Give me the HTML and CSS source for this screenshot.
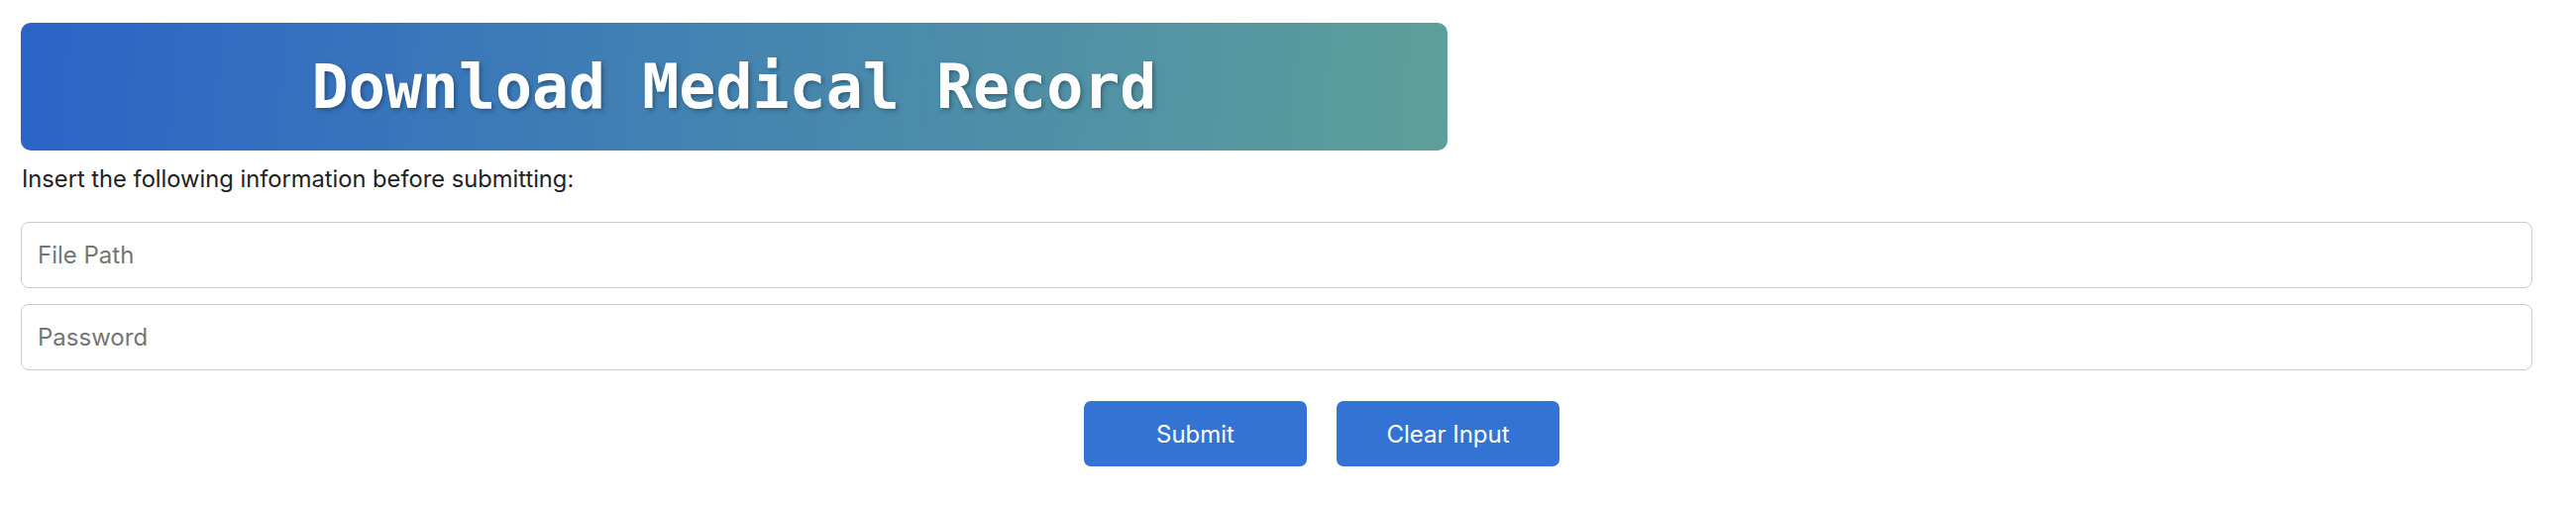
FILE: index.html
```html
<!DOCTYPE html>
<html lang="en">
<head>
<meta charset="utf-8">
<title>Download Medical Record</title>
<link rel="stylesheet" href="styles.css">
</head>
<body>
<main class="page">
  <header class="banner">
    <h1 class="banner-title">Download Medical Record</h1>
  </header>
  <p class="intro">Insert the following information before submitting:</p>
  <form class="form">
    <input class="field" type="text" placeholder="File Path">
    <input class="field" type="password" placeholder="Password">
    <div class="actions">
      <button class="btn" type="button">Submit</button>
      <button class="btn" type="button">Clear Input</button>
    </div>
  </form>
</main>
</body>
</html>
```

FILE: styles.css
```css
html, body {
  margin: 0;
  padding: 0;
  background: #ffffff;
}

.page {
  padding: 23px 44px 0 21px;
  font-family: Inter, "Noto Sans", sans-serif;
  color: #222222;
}

.banner {
  width: 1440px;
  height: 129px;
  box-sizing: border-box;
  padding-top: 2px;
  border-radius: 10px;
  background: linear-gradient(95deg, #2b63c7 0%, #4484b0 50%, #5e9f9a 100%);
  display: flex;
  align-items: center;
  justify-content: center;
}

.banner-title {
  margin: 0;
  font-family: "DejaVu Sans Mono", monospace;
  font-weight: bold;
  font-size: 61.6px;
  line-height: 1;
  color: #ffffff;
  text-shadow: 2px 2px 4px rgba(0, 0, 0, 0.3);
}

.intro {
  margin: 14px 0 0 1px;
  font-size: 23.7px;
  line-height: 29px;
}

.form {
  margin-top: 29px;
  display: flex;
  flex-direction: column;
  gap: 16px;
}

.field {
  display: block;
  width: 100%;
  height: 67px;
  box-sizing: border-box;
  padding: 0 16px;
  border: 1px solid #cccccc;
  border-radius: 8px;
  font-family: Inter, "Noto Sans", sans-serif;
  font-size: 24px;
  color: #222222;
  background: #ffffff;
  outline: none;
}

.field::placeholder {
  color: #757575;
}

.actions {
  margin-top: 15px;
  display: flex;
  justify-content: center;
  gap: 30px;
  padding-left: 91px;
}

.btn {
  width: 225px;
  height: 66px;
  border: none;
  border-radius: 7px;
  background: #3373d4;
  color: #ffffff;
  font-family: Inter, "Noto Sans", sans-serif;
  font-size: 24px;
  cursor: pointer;
}
```
